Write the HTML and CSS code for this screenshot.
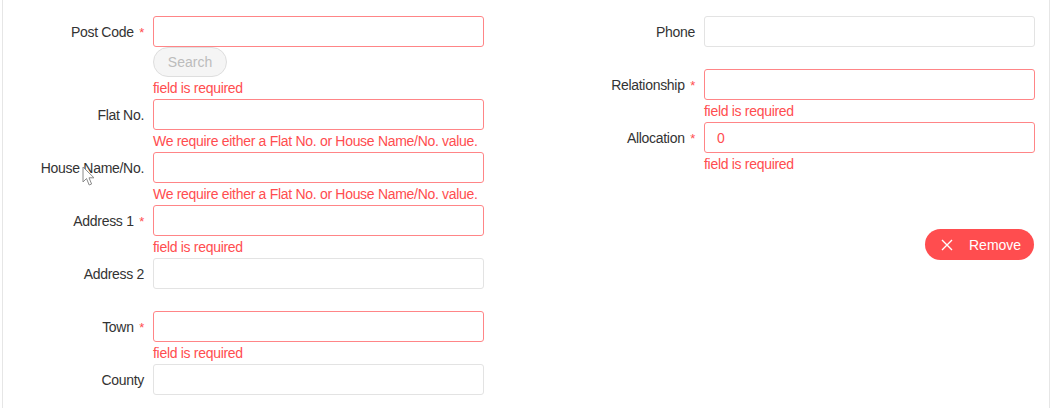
FILE: index.html
```html
<!DOCTYPE html>
<html lang="en">
<head>
<meta charset="utf-8">
<title>Address form</title>
<link rel="stylesheet" href="styles.css">
</head>
<body>
<div class="frame">
  <form class="form">
    <div class="col">
      <div class="item">
        <label class="label">Post Code <span class="req">*</span></label>
        <div class="control">
          <input class="input error" type="text">
          <button type="button" class="search">Search</button>
          <div class="explain">field is required</div>
        </div>
      </div>
      <div class="item">
        <label class="label">Flat No.</label>
        <div class="control">
          <input class="input error" type="text">
          <div class="explain">We require either a Flat No. or House Name/No. value.</div>
        </div>
      </div>
      <div class="item">
        <label class="label">House Name/No.</label>
        <div class="control">
          <input class="input error" type="text">
          <div class="explain">We require either a Flat No. or House Name/No. value.</div>
        </div>
      </div>
      <div class="item">
        <label class="label">Address 1 <span class="req">*</span></label>
        <div class="control">
          <input class="input error" type="text">
          <div class="explain">field is required</div>
        </div>
      </div>
      <div class="item">
        <label class="label">Address 2</label>
        <div class="control">
          <input class="input" type="text">
          <div class="explain"></div>
        </div>
      </div>
      <div class="item">
        <label class="label">Town <span class="req">*</span></label>
        <div class="control">
          <input class="input error" type="text">
          <div class="explain">field is required</div>
        </div>
      </div>
      <div class="item">
        <label class="label">County</label>
        <div class="control">
          <input class="input" type="text">
          <div class="explain"></div>
        </div>
      </div>
    </div>
    <div class="col">
      <div class="item">
        <label class="label">Phone</label>
        <div class="control">
          <input class="input" type="text">
          <div class="explain"></div>
        </div>
      </div>
      <div class="item">
        <label class="label">Relationship <span class="req">*</span></label>
        <div class="control">
          <input class="input error" type="text">
          <div class="explain">field is required</div>
        </div>
      </div>
      <div class="item">
        <label class="label">Allocation <span class="req">*</span></label>
        <div class="control">
          <input class="input error value-error" type="text" value="0">
          <div class="explain">field is required</div>
        </div>
      </div>
      <div class="spacer"></div>
      <div class="actions">
        <button type="button" class="remove">
          <svg class="x-icon" width="12" height="12" viewBox="0 0 12 12" aria-hidden="true">
            <path d="M1 1 L11 11 M11 1 L1 11" stroke="#fff" stroke-width="1.4" fill="none"/>
          </svg>
          <span>Remove</span>
        </button>
      </div>
    </div>
  </form>
  <svg class="cursor" width="14" height="22" viewBox="0 0 14 22" aria-hidden="true">
    <path d="M1 1 L1 16 L4.5 12.5 L7.2 19 L9.6 18 L7 11.8 L12 11.8 Z" fill="#fff" stroke="#8a8a8a" stroke-width="1" stroke-linejoin="round"/>
  </svg>
</div>
</body>
</html>
```

FILE: styles.css
```css
* { box-sizing: border-box; }

html, body {
  margin: 0;
  padding: 0;
  background: #fff;
}

body {
  font-family: "Liberation Sans", Arial, Helvetica, sans-serif;
  font-size: 14px;
  letter-spacing: -0.3px;
  color: #333;
  width: 1052px;
  height: 408px;
  overflow: hidden;
}

.frame {
  position: relative;
  margin-left: 2px;
  width: 1048px;
  height: 408px;
  border-left: 1px solid #e6e6e6;
  border-right: 1px solid #e6e6e6;
  overflow: hidden;
}

.form {
  display: grid;
  grid-template-columns: 550px 550px;
  column-gap: 1px;
  padding-top: 16px;
}

.col {
  display: flex;
  flex-direction: column;
}

.item {
  display: flex;
  align-items: flex-start;
}

.label {
  width: 150px;
  flex: none;
  height: 31px;
  line-height: 32px;
  text-align: right;
  padding-right: 9px;
  color: #333;
  white-space: nowrap;
}

.req {
  color: #ff4d4f;
  font-size: 13px;
  margin-left: 2px;
}

.control {
  width: 331px;
  display: flex;
  flex-direction: column;
  align-items: flex-start;
}

.input {
  width: 331px;
  height: 31px;
  border: 1px solid #e3e3e3;
  border-radius: 3px;
  padding: 0 12px;
  font-family: inherit;
  font-size: 14px;
  color: #333;
  background: #fff;
  outline: none;
}

.input.error {
  border-color: #ff8587;
}

.input.value-error {
  color: #ff4d4f;
}

.explain {
  height: 22px;
  line-height: 23px;
  color: #ff4d4f;
  font-size: 14px;
  white-space: nowrap;
}

.search {
  width: 74px;
  height: 30px;
  border: 1px solid #dedede;
  border-radius: 15px;
  background: #f5f5f5;
  color: #bcbcbc;
  font-family: inherit;
  font-size: 14px;
  letter-spacing: 0;
  padding: 0;
}

.spacer {
  height: 54px;
}

.actions {
  width: 480px;
  display: flex;
  justify-content: flex-end;
}

.remove {
  display: flex;
  align-items: center;
  width: 109px;
  height: 31px;
  border: none;
  border-radius: 16px;
  background: #ff4d4f;
  color: #fff;
  font-family: inherit;
  font-size: 14px;
  letter-spacing: 0;
  padding: 0 0 0 16px;
}

.x-icon {
  flex: none;
  margin-right: 16px;
}

.cursor {
  position: absolute;
  left: 79px;
  top: 166px;
}
```
